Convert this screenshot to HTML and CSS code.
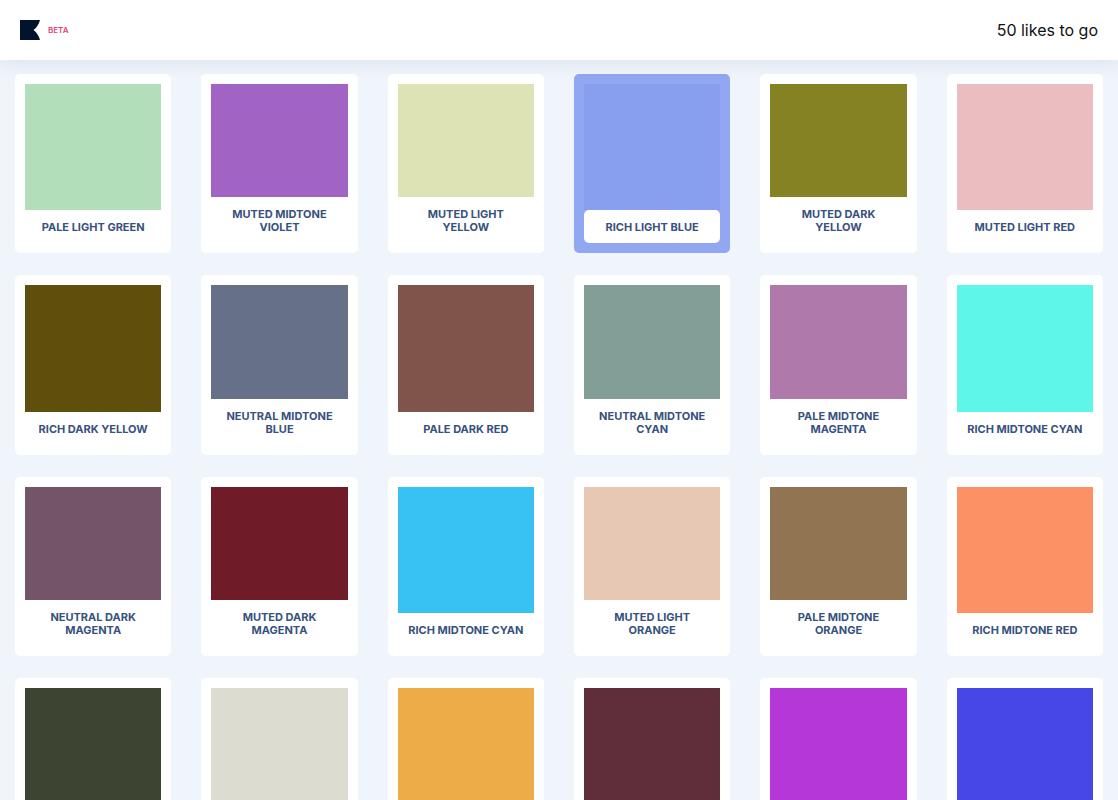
FILE: index.html
```html
<!DOCTYPE html>
<html lang="en">
<head>
  <meta charset="utf-8">
  <title>Colors</title>
  <meta name="viewport" content="width=device-width, initial-scale=1">
  <link rel="stylesheet" href="styles.css">
</head>
<body>
  <header class="header">
    <a class="logo" href="/" aria-label="Home">
      <svg width="20" height="20" viewBox="0 0 20 20" aria-hidden="true">
        <path fill="#02142c" d="M0 0H20C18.8 4.2 17 7.4 13.5 10C17 12.6 18.8 15.8 20 20H0Z"/>
      </svg>
      <span class="beta">BETA</span>
    </a>
    <p class="progress">50 likes to go</p>
  </header>

  <main class="grid" id="grid"></main>

  <script src="script.js"></script>
</body>
</html>
```
FILE: styles.css
```css
* {
  box-sizing: border-box;
}

body {
  margin: 0;
  background-color: #f0f4fb;
  font-family: Inter, "Liberation Sans", sans-serif;
}

.header {
  position: sticky;
  top: 0;
  z-index: 1;
  display: flex;
  align-items: center;
  justify-content: space-between;
  height: 60px;
  padding: 0 20px;
  background-color: #fff;
  box-shadow: 0 0 20px rgba(50, 90, 120, 0.14);
}

.logo {
  display: flex;
  align-items: center;
  gap: 8px;
  text-decoration: none;
}

.beta {
  color: #e5417c;
  font-size: 8px;
  font-weight: 600;
}

.progress {
  margin: 0;
  color: #111;
  font-size: 16px;
}

.grid {
  display: grid;
  grid-template-columns: repeat(6, 1fr);
  gap: 22px 30px;
  padding: 14px 15px;
}

.card {
  display: flex;
  flex-direction: column;
  aspect-ratio: 156 / 179;
  min-width: 0;
  padding: 10px;
  border: none;
  border-radius: 5px;
  background-color: #fff;
  font-family: inherit;
  cursor: pointer;
}

.card.active {
  background-color: #92a7f2;
}

.swatch {
  flex: 1;
  width: 100%;
}

.name {
  width: 100%;
  padding: 11px 10px 9px;
  border-radius: 5px;
  background-color: #fff;
  color: #37517e;
  font-size: 11px;
  font-weight: 700;
  line-height: 13px;
  text-align: center;
  text-transform: uppercase;
}

@media (max-width: 800px) {
  .grid {
    grid-template-columns: repeat(3, 1fr);
  }
}
```
FILE: script.js
```js
const colors = [
  { name: 'Pale light green', hex: '#b2dfba' },
  { name: 'Muted midtone violet', hex: '#a264c4' },
  { name: 'Muted light yellow', hex: '#dde3b4' },
  { name: 'Rich light blue', hex: '#889ff0', active: true },
  { name: 'Muted dark yellow', hex: '#858223' },
  { name: 'Muted light red', hex: '#ebbdc0' },
  { name: 'Rich dark yellow', hex: '#5e500c' },
  { name: 'Neutral midtone blue', hex: '#667088' },
  { name: 'Pale dark red', hex: '#80544a' },
  { name: 'Neutral midtone cyan', hex: '#839d97' },
  { name: 'Pale midtone magenta', hex: '#b079ac' },
  { name: 'Rich midtone cyan', hex: '#5df6e8' },
  { name: 'Neutral dark magenta', hex: '#735567' },
  { name: 'Muted dark magenta', hex: '#701c28' },
  { name: 'Rich midtone cyan', hex: '#38c2f4' },
  { name: 'Muted light orange', hex: '#e6c8b4' },
  { name: 'Pale midtone orange', hex: '#917553' },
  { name: 'Rich midtone red', hex: '#fd9166' },
  { name: 'Neutral dark green', hex: '#3d4532' },
  { name: 'Neutral light yellow', hex: '#dcdcd0' },
  { name: 'Rich midtone orange', hex: '#ecac48' },
  { name: 'Muted dark red', hex: '#602e3b' },
  { name: 'Rich midtone violet', hex: '#b637d8' },
  { name: 'Rich midtone blue', hex: '#4747e7' }
];

const grid = document.querySelector('#grid');

colors.forEach(color => {
  const card = document.createElement('button');
  card.type = 'button';
  card.className = color.active ? 'card active' : 'card';
  card.innerHTML = `
    <span class="swatch" style="background-color: ${color.hex}"></span>
    <span class="name">${color.name}</span>
  `;
  grid.appendChild(card);
});
```
